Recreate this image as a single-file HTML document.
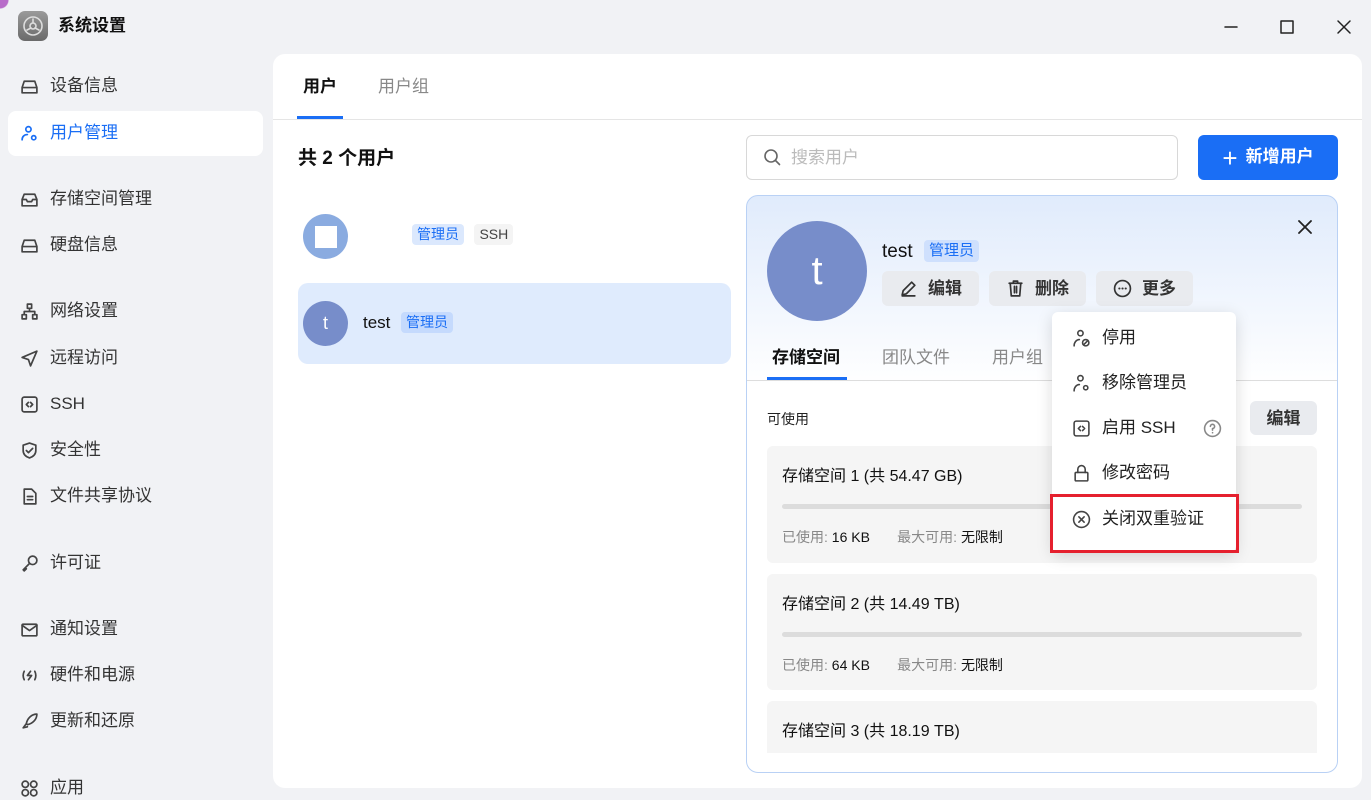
<!DOCTYPE html>
<html><head><meta charset="utf-8"><style>
*{margin:0;padding:0;box-sizing:border-box}
body{width:1371px;height:798px;overflow:hidden;background:#f1f2f5;font-family:"Liberation Sans","Noto Sans CJK SC",sans-serif;position:relative;color:#222;line-height:1.35}
.a{position:absolute}
.tx{transform:translateY(2px)}
svg{stroke-linecap:round;stroke-linejoin:round}
.nav{position:absolute;left:20px;font-size:17px;color:#333;display:flex;align-items:center;gap:11px;transform:translateY(2px)}
.nav svg{width:19px;height:19px;fill:none;stroke:#444;stroke-width:1.6}
.tag{display:inline-block;background:#dbe8fd;color:#1a6ef5;font-size:14px;padding:2px 5px;border-radius:4px;line-height:1.2}
.btn{position:absolute;top:271px;height:35px;background:#e9ebef;border-radius:6px;font-size:17px;font-weight:bold;color:#333;display:flex;align-items:center;justify-content:center;gap:10px}
.btn span{transform:translateY(1px)}
.btn svg{width:19px;height:19px;fill:none;stroke:#333;stroke-width:1.6}
.mi{position:absolute;left:1072px;font-size:17px;color:#222;display:flex;align-items:center;gap:11px;transform:translateY(2px)}
.mi svg{width:19px;height:19px;fill:none;stroke:#444;stroke-width:1.5}
.card{position:absolute;left:767px;width:550px;background:#f5f5f5;border-radius:6px}
.card .t{position:absolute;left:15px;top:20px;font-size:16px;color:#111}
.card .bar{position:absolute;left:15px;right:15px;top:58px;height:5px;background:#dcdcdc;border-radius:3px}
.card .u{position:absolute;left:15px;top:82px;font-size:14px;color:#888}
.card .u b{font-weight:normal;color:#111}
</style></head><body>
<div class="a" style="left:0;top:0;width:14px;height:14px;background:radial-gradient(circle at 0 0,#b86cc9 0 8px,transparent 9px)"></div>
<div class="a" style="left:18px;top:11px;width:30px;height:30px;border-radius:7px;background:linear-gradient(#9a9a9a,#6a6a6a)"><svg width="30" height="30" viewBox="0 0 30 30" fill="none" stroke="#ddd" stroke-width="1.6"><circle cx="15" cy="15" r="9"/><circle cx="15" cy="15" r="3"/><path d="M15 8v4M9 19l4-2M21 19l-4-2"/></svg></div>
<div class="a" style="left:58px;top:15px;font-size:17px;font-weight:bold;color:#111">系统设置</div>
<svg class="a" style="left:1223px;top:19px" width="16" height="16"><path d="M2 8h12" stroke="#222" stroke-width="1.5"/></svg>
<svg class="a" style="left:1279px;top:19px" width="16" height="16"><rect x="2" y="2" width="12" height="12" fill="none" stroke="#222" stroke-width="1.5"/></svg>
<svg class="a" style="left:1336px;top:19px" width="16" height="16"><path d="M2 2l12 12M14 2L2 14" stroke="#222" stroke-width="1.5"/></svg>

<div class="a" style="left:8px;top:111px;width:255px;height:45px;background:#fff;border-radius:8px"></div>
<div class="nav" style="top:73px"><svg viewBox="0 0 18 18"><path d="M2 10l2-6h10l2 6v5H2z M2 10h14"/></svg>设备信息</div>
<div class="nav" style="top:120px;color:#1a6ef5"><svg viewBox="0 0 18 18" style="stroke:#1a6ef5"><circle cx="8" cy="5" r="2.5"/><path d="M2 15c0-3 2-5 5-5"/><circle cx="13" cy="13" r="2"/></svg>用户管理</div>
<div class="nav" style="top:186px"><svg viewBox="0 0 18 18"><path d="M2 9l2-5h10l2 5v6H2z M2 9h4l1 2h4l1-2h4"/></svg>存储空间管理</div>
<div class="nav" style="top:232px"><svg viewBox="0 0 18 18"><path d="M2 10l2-6h10l2 6v5H2z M2 10h14"/></svg>硬盘信息</div>
<div class="nav" style="top:298px"><svg viewBox="0 0 18 18"><rect x="7" y="2" width="4" height="4"/><rect x="2" y="12" width="4" height="4"/><rect x="12" y="12" width="4" height="4"/><path d="M9 6v3M4 12V9h10v3"/></svg>网络设置</div>
<div class="nav" style="top:345px"><svg viewBox="0 0 18 18"><path d="M16 2L2 8l6 2 2 6z"/></svg>远程访问</div>
<div class="nav" style="top:391px"><svg viewBox="0 0 18 18"><rect x="2" y="2" width="14" height="14" rx="2"/><path d="M8 7l-2 2 2 2M10 7l2 2-2 2"/></svg>SSH</div>
<div class="nav" style="top:437px"><svg viewBox="0 0 18 18"><path d="M9 2l6 2v5c0 4-3 6-6 7-3-1-6-3-6-7V4z M6 9l2 2 4-4"/></svg>安全性</div>
<div class="nav" style="top:483px"><svg viewBox="0 0 18 18"><path d="M4 2h7l4 4v10H4z M7 9h5M7 12h5"/></svg>文件共享协议</div>
<div class="nav" style="top:550px"><svg viewBox="0 0 18 18"><circle cx="12" cy="6" r="4"/><path d="M9 9l-6 6 1 1 2-2"/></svg>许可证</div>
<div class="nav" style="top:616px"><svg viewBox="0 0 18 18"><rect x="2" y="4" width="14" height="11" rx="1"/><path d="M2 5l7 5 7-5"/></svg>通知设置</div>
<div class="nav" style="top:662px"><svg viewBox="0 0 18 18"><path d="M4 5q-2 4 0 8M14 5q2 4 0 8M10 5l-3 4h4l-3 4"/></svg>硬件和电源</div>
<div class="nav" style="top:708px"><svg viewBox="0 0 18 18"><path d="M16 2c-5 0-9 4-10 9l1 1c5-1 9-5 9-10zM6 11l-3 4 4-1"/></svg>更新和还原</div>
<div class="nav" style="top:775px"><svg viewBox="0 0 18 18"><circle cx="5" cy="5" r="3"/><circle cx="13" cy="5" r="3"/><circle cx="5" cy="13" r="3"/><circle cx="13" cy="13" r="3"/></svg>应用</div>

<div class="a" style="left:273px;top:54px;width:1089px;height:734px;background:#fff;border-radius:12px"></div>
<div class="a" style="left:303px;top:76px;font-size:17px;font-weight:bold;color:#111">用户</div>
<div class="a" style="left:297px;top:116px;width:46px;height:3px;background:#1a6ef5"></div>
<div class="a" style="left:378px;top:76px;font-size:17px;color:#888">用户组</div>
<div class="a" style="left:273px;top:119px;width:1089px;height:1px;background:#e5e5e5"></div>

<div class="a" style="left:298px;top:146px;font-size:19px;font-weight:bold;color:#111">共 2 个用户</div>
<div class="a" style="left:303px;top:214px;width:45px;height:45px;border-radius:50%;background:#8aabe0"></div>
<div class="a" style="left:315px;top:226px;width:22px;height:22px;background:#fff"></div>
<div class="a" style="left:412px;top:224px"><span class="tag">管理员</span> <span class="tag" style="background:#f4f4f4;color:#444;margin-left:6px">SSH</span></div>
<div class="a" style="left:298px;top:283px;width:433px;height:81px;background:#dfebfd;border-radius:10px"></div>
<div class="a" style="left:303px;top:301px;width:45px;height:45px;border-radius:50%;background:#778dca;color:#fff;font-size:18px;text-align:center;line-height:45px">t</div>
<div class="a" style="left:363px;top:312px;font-size:17px;color:#111">test</div>
<div class="a" style="left:401px;top:312px"><span class="tag" style="background:#c5dafd">管理员</span></div>

<div class="a" style="left:746px;top:135px;width:432px;height:45px;border:1px solid #d8d8d8;border-radius:6px"></div>
<svg class="a" style="left:763px;top:148px" width="18" height="18" fill="none" stroke="#666" stroke-width="1.6"><circle cx="8" cy="8" r="6"/><path d="M12.5 12.5l4 4"/></svg>
<div class="a" style="left:791px;top:147px;font-size:17px;color:#bbb">搜索用户</div>
<div class="a" style="left:1198px;top:135px;width:140px;height:45px;background:#1a6ef5;border-radius:6px;color:#fff;font-size:17px;font-weight:bold;display:flex;align-items:center;justify-content:center;gap:8px"><span style="font-size:26px;font-weight:normal;line-height:20px">+</span>新增用户</div>

<div class="a" style="left:746px;top:195px;width:592px;height:578px;border:1px solid #b9d1f5;border-radius:12px;background:linear-gradient(#e0ebfc 0,#fff 190px);overflow:hidden"></div>
<svg class="a" style="left:1298px;top:220px" width="14" height="14"><path d="M1 1l12 12M13 1L1 13" stroke="#222" stroke-width="1.8"/></svg>
<div class="a" style="left:767px;top:221px;width:100px;height:100px;border-radius:50%;background:#778dca;color:#fff;font-size:40px;text-align:center;line-height:100px">t</div>
<div class="a" style="left:882px;top:239px;font-size:19px;color:#111">test</div>
<div class="a" style="left:924px;top:240px"><span class="tag" style="background:#cfe0fd;font-size:15px">管理员</span></div>
<div class="btn" style="left:882px;width:97px"><svg viewBox="0 0 18 18"><path d="M3 15l1-4 8-8 3 3-8 8zM3 16h12"/></svg><span>编辑</span></div>
<div class="btn" style="left:989px;width:97px"><svg viewBox="0 0 18 18"><path d="M3 4h12M7 4V2h4v2M4 4l1 12h8l1-12M8 7v6M10 7v6"/></svg><span>删除</span></div>
<div class="btn" style="left:1096px;width:97px"><svg viewBox="0 0 18 18"><circle cx="9" cy="9" r="7.5"/><path d="M6 9h.1M9 9h.1M12 9h.1" stroke-width="2"/></svg><span>更多</span></div>

<div class="a" style="left:772px;top:347px;font-size:17px;font-weight:bold;color:#111">存储空间</div>
<div class="a" style="left:767px;top:377px;width:80px;height:3px;background:#1a6ef5"></div>
<div class="a" style="left:882px;top:347px;font-size:17px;color:#888">团队文件</div>
<div class="a" style="left:992px;top:347px;font-size:17px;color:#888">用户组</div>
<div class="a" style="left:747px;top:380px;width:590px;height:1px;background:#ddd"></div>
<div class="a" style="left:767px;top:410px;font-size:14px;color:#222">可使用</div>
<div class="a" style="left:1250px;top:401px;width:67px;height:34px;background:#e9ebef;border-radius:6px;font-size:17px;font-weight:bold;color:#333;text-align:center;line-height:36px">编辑</div>

<div class="card" style="top:446px;height:117px"><div class="t">存储空间 1 (共 54.47 GB)</div><div class="bar"></div><div class="u">已使用: <b>16 KB</b>&nbsp;&nbsp;&nbsp;&nbsp;&nbsp;&nbsp;&nbsp;最大可用: <b>无限制</b></div></div>
<div class="card" style="top:574px;height:116px"><div class="t">存储空间 2 (共 14.49 TB)</div><div class="bar"></div><div class="u">已使用: <b>64 KB</b>&nbsp;&nbsp;&nbsp;&nbsp;&nbsp;&nbsp;&nbsp;最大可用: <b>无限制</b></div></div>
<div class="card" style="top:701px;height:52px;border-radius:6px 6px 0 0"><div class="t">存储空间 3 (共 18.19 TB)</div></div>

<div class="a" style="left:1052px;top:312px;width:184px;height:240px;background:#fff;border-radius:6px;box-shadow:0 4px 16px rgba(0,0,0,.15)"></div>
<div class="mi" style="top:325px"><svg viewBox="0 0 18 18"><circle cx="8" cy="4" r="2.5"/><path d="M2 16c0-3 2-6 5-6"/><circle cx="13" cy="13" r="3"/><path d="M11 15l4-4"/></svg>停用</div>
<div class="mi" style="top:370px"><svg viewBox="0 0 18 18"><circle cx="8" cy="4" r="2.5"/><path d="M2 16c0-3 2-6 5-6"/><circle cx="13" cy="13" r="2"/></svg>移除管理员</div>
<div class="mi" style="top:415px"><svg viewBox="0 0 18 18"><rect x="2" y="2" width="14" height="14" rx="2"/><path d="M8 7l-2 2 2 2M10 7l2 2-2 2"/></svg>启用 SSH<svg viewBox="0 0 18 18" style="margin-left:16px;stroke:#888"><circle cx="9" cy="9" r="7.5"/><path d="M7 7a2 2 0 1 1 2 2v1.5M9 13h.1"/></svg></div>
<div class="mi" style="top:460px"><svg viewBox="0 0 18 18"><rect x="3" y="8" width="12" height="8" rx="1"/><path d="M5.5 8V5a3.5 3.5 0 0 1 7 0v3"/></svg>修改密码</div>
<div class="mi" style="top:506px"><svg viewBox="0 0 18 18"><circle cx="9" cy="9" r="7.5"/><path d="M6.5 6.5l5 5M11.5 6.5l-5 5"/></svg>关闭双重验证</div>
<div class="a" style="left:1050px;top:494px;width:189px;height:59px;border:3px solid #e5202e"></div>
</body></html>
